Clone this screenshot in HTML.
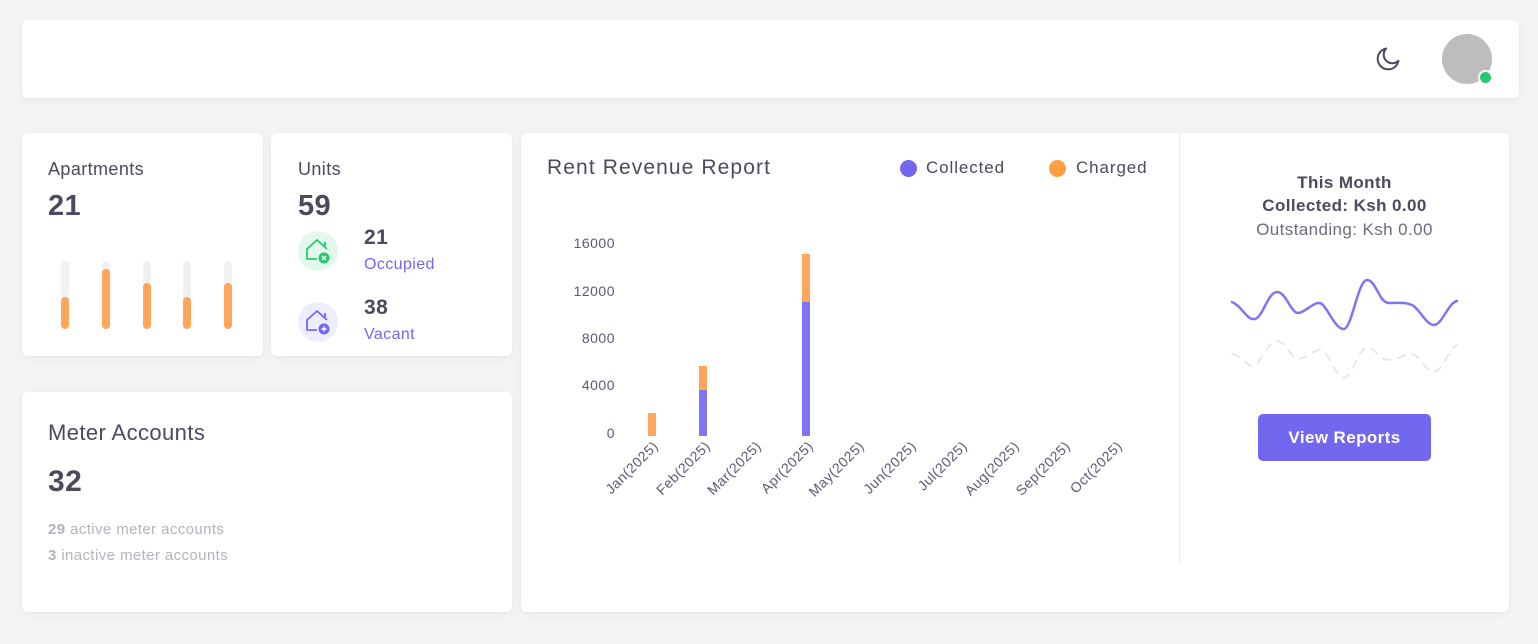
<!DOCTYPE html>
<html><head><meta charset="utf-8"><style>
body{margin:0;width:1538px;height:644px;background:#f4f4f5;font-family:"Liberation Sans",sans-serif;color:#4b4a5e;position:relative;overflow:hidden;letter-spacing:0.4px}
.card{position:absolute;background:#fff;border-radius:6px;box-shadow:0 2px 8px rgba(0,0,0,.06)}
.t{position:absolute;white-space:nowrap}
</style></head><body>
<div class="card" style="left:22px;top:20px;width:1497px;height:78px"></div>
<svg style="position:absolute;left:1374px;top:45px" width="28" height="28" viewBox="0 0 24 24" fill="none" stroke="#4b4a5e" stroke-width="1.7" stroke-linecap="round" stroke-linejoin="round"><path d="M21 13.5A9 9 0 1 1 10.5 3 7 7 0 0 0 21 13.5z"/></svg>
<div style="position:absolute;left:1442px;top:34px;width:50px;height:50px;border-radius:50%;background:#bdbdbd"></div>
<div style="position:absolute;left:1478px;top:70px;width:11px;height:11px;border-radius:50%;background:#28c76f;border:2px solid #fff"></div>

<div class="card" style="left:22px;top:133px;width:241px;height:223px"></div>
<div class="t" style="left:48px;top:159px;font-size:18px">Apartments</div>
<div class="t" style="left:48px;top:190px;font-size:29px;font-weight:bold">21</div>
<svg style="position:absolute;left:22px;top:133px" width="241" height="223">
<g stroke-linecap="round" stroke-width="8">
<line x1="43" y1="132" x2="43" y2="192" stroke="#f1f1f3"/><line x1="43" y1="168" x2="43" y2="192" stroke="#ffa65b"/>
<line x1="84" y1="132" x2="84" y2="192" stroke="#f1f1f3"/><line x1="84" y1="140" x2="84" y2="192" stroke="#ffa65b"/>
<line x1="125" y1="132" x2="125" y2="192" stroke="#f1f1f3"/><line x1="125" y1="154" x2="125" y2="192" stroke="#ffa65b"/>
<line x1="165" y1="132" x2="165" y2="192" stroke="#f1f1f3"/><line x1="165" y1="168" x2="165" y2="192" stroke="#ffa65b"/>
<line x1="206" y1="132" x2="206" y2="192" stroke="#f1f1f3"/><line x1="206" y1="154" x2="206" y2="192" stroke="#ffa65b"/>
</g></svg>

<div class="card" style="left:271px;top:133px;width:241px;height:223px"></div>
<div class="t" style="left:298px;top:159px;font-size:18px">Units</div>
<div class="t" style="left:298px;top:190px;font-size:29px;font-weight:bold">59</div>
<div style="position:absolute;left:298px;top:231px;width:40px;height:40px;border-radius:50%;background:#e3f8ec"></div>
<svg style="position:absolute;left:298px;top:231px" width="40" height="40" fill="none" stroke="#28c76f" stroke-width="1.8" stroke-linejoin="round"><path d="M19 28H9V18L19 9L29 18M27 11V15"/><circle cx="26" cy="27" r="5.5" fill="#28c76f" stroke="none"/><path d="M24 25l4 4M28 25l-4 4" stroke="#fff" stroke-width="1.4"/></svg>
<div class="t" style="left:364px;top:226px;font-size:21px;font-weight:bold">21</div>
<div class="t" style="left:364px;top:256px;font-size:16px;color:#7367f0">Occupied</div>
<div style="position:absolute;left:298px;top:302px;width:40px;height:40px;border-radius:50%;background:#eeedfd"></div>
<svg style="position:absolute;left:298px;top:302px" width="40" height="40" fill="none" stroke="#7367f0" stroke-width="1.8" stroke-linejoin="round"><path d="M19 28H9V18L19 9L29 18M27 11V15"/><circle cx="26" cy="27" r="5.5" fill="#7367f0" stroke="none"/><path d="M26 24.5v5M23.5 27h5" stroke="#fff" stroke-width="1.4"/></svg>
<div class="t" style="left:364px;top:296px;font-size:21px;font-weight:bold">38</div>
<div class="t" style="left:364px;top:326px;font-size:16px;color:#7367f0">Vacant</div>

<div class="card" style="left:22px;top:392px;width:490px;height:220px"></div>
<div class="t" style="left:48px;top:420px;font-size:22px">Meter Accounts</div>
<div class="t" style="left:48px;top:465px;font-size:30px;font-weight:bold">32</div>
<div class="t" style="left:48px;top:521px;font-size:15px;color:#b4b3bd"><b>29</b> active meter accounts</div>
<div class="t" style="left:48px;top:547px;font-size:15px;color:#b4b3bd"><b>3</b> inactive meter accounts</div>

<div class="card" style="left:521px;top:133px;width:988px;height:479px"></div>
<div style="position:absolute;left:1179px;top:133px;width:1px;height:430px;background:#ebe9f1"></div>
<div class="t" style="left:547px;top:156px;font-size:21px;letter-spacing:1.1px">Rent Revenue Report</div>
<div style="position:absolute;left:900px;top:160px;width:17px;height:17px;border-radius:50%;background:#7367f0"></div>
<div class="t" style="left:926px;top:158px;font-size:17px;letter-spacing:0.9px">Collected</div>
<div style="position:absolute;left:1049px;top:160px;width:17px;height:17px;border-radius:50%;background:#ff9f43"></div>
<div class="t" style="left:1076px;top:158px;font-size:17px;letter-spacing:0.9px">Charged</div>
<svg style="position:absolute;left:521px;top:133px" width="660" height="420" font-family="Liberation Sans" font-size="14" fill="#5e5873" letter-spacing="0.5">
<g text-anchor="end"><text x="94" y="115">16000</text><text x="94" y="163">12000</text><text x="94" y="210">8000</text><text x="94" y="257">4000</text><text x="94" y="305">0</text></g>
<rect x="127" y="280" width="8" height="23" fill="#ffa65b"/>
<rect x="178" y="233" width="8" height="24" fill="#ffa65b"/><rect x="178" y="257" width="8" height="46" fill="#7f74f2"/>
<rect x="281" y="121" width="8" height="48" fill="#ffa65b"/><rect x="281" y="169" width="8" height="134" fill="#7f74f2"/>
<g font-size="14">
<text transform="translate(138,314) rotate(-45)" text-anchor="end">Jan(2025)</text>
<text transform="translate(190,314) rotate(-45)" text-anchor="end">Feb(2025)</text>
<text transform="translate(241,314) rotate(-45)" text-anchor="end">Mar(2025)</text>
<text transform="translate(293,314) rotate(-45)" text-anchor="end">Apr(2025)</text>
<text transform="translate(344,314) rotate(-45)" text-anchor="end">May(2025)</text>
<text transform="translate(396,314) rotate(-45)" text-anchor="end">Jun(2025)</text>
<text transform="translate(447,314) rotate(-45)" text-anchor="end">Jul(2025)</text>
<text transform="translate(499,314) rotate(-45)" text-anchor="end">Aug(2025)</text>
<text transform="translate(550,314) rotate(-45)" text-anchor="end">Sep(2025)</text>
<text transform="translate(602,314) rotate(-45)" text-anchor="end">Oct(2025)</text>
</g></svg>
<div class="t" style="left:1180px;top:171px;width:329px;text-align:center;font-size:17px;font-weight:bold;line-height:23px">This Month<br>Collected: Ksh 0.00</div>
<div class="t" style="left:1180px;top:220px;width:329px;text-align:center;font-size:17px;color:#6e6b7b">Outstanding: Ksh 0.00</div>
<svg style="position:absolute;left:0;top:0" width="1538" height="644" fill="none" stroke-linecap="round">
<path d="M1232 302C1242 306 1247 321 1255 319S1268 292 1277 292S1291 313 1298 313S1316 299 1322 304S1336 330 1344 329S1358 280 1367 280S1379 303 1389 303S1405 302 1412 305S1426 325 1434 325S1448 303 1457 301" stroke="#7f74f2" stroke-width="2.5"/>
<path d="M1232 354C1242 356 1247 366 1253 366S1268 341 1277 341S1291 359 1298 359S1316 348 1322 350S1336 378 1344 378S1358 348 1367 348S1379 360 1389 360S1405 353 1412 354S1426 372 1434 372S1448 350 1457 345" stroke="#e2e1e8" stroke-width="1.5" stroke-dasharray="8 7"/>
</svg>
<div style="position:absolute;left:1258px;top:414px;width:173px;height:47px;border-radius:5px;background:#7367f0;color:#fff;font-size:17px;font-weight:bold;text-align:center;line-height:47px">View Reports</div>
</body></html>
